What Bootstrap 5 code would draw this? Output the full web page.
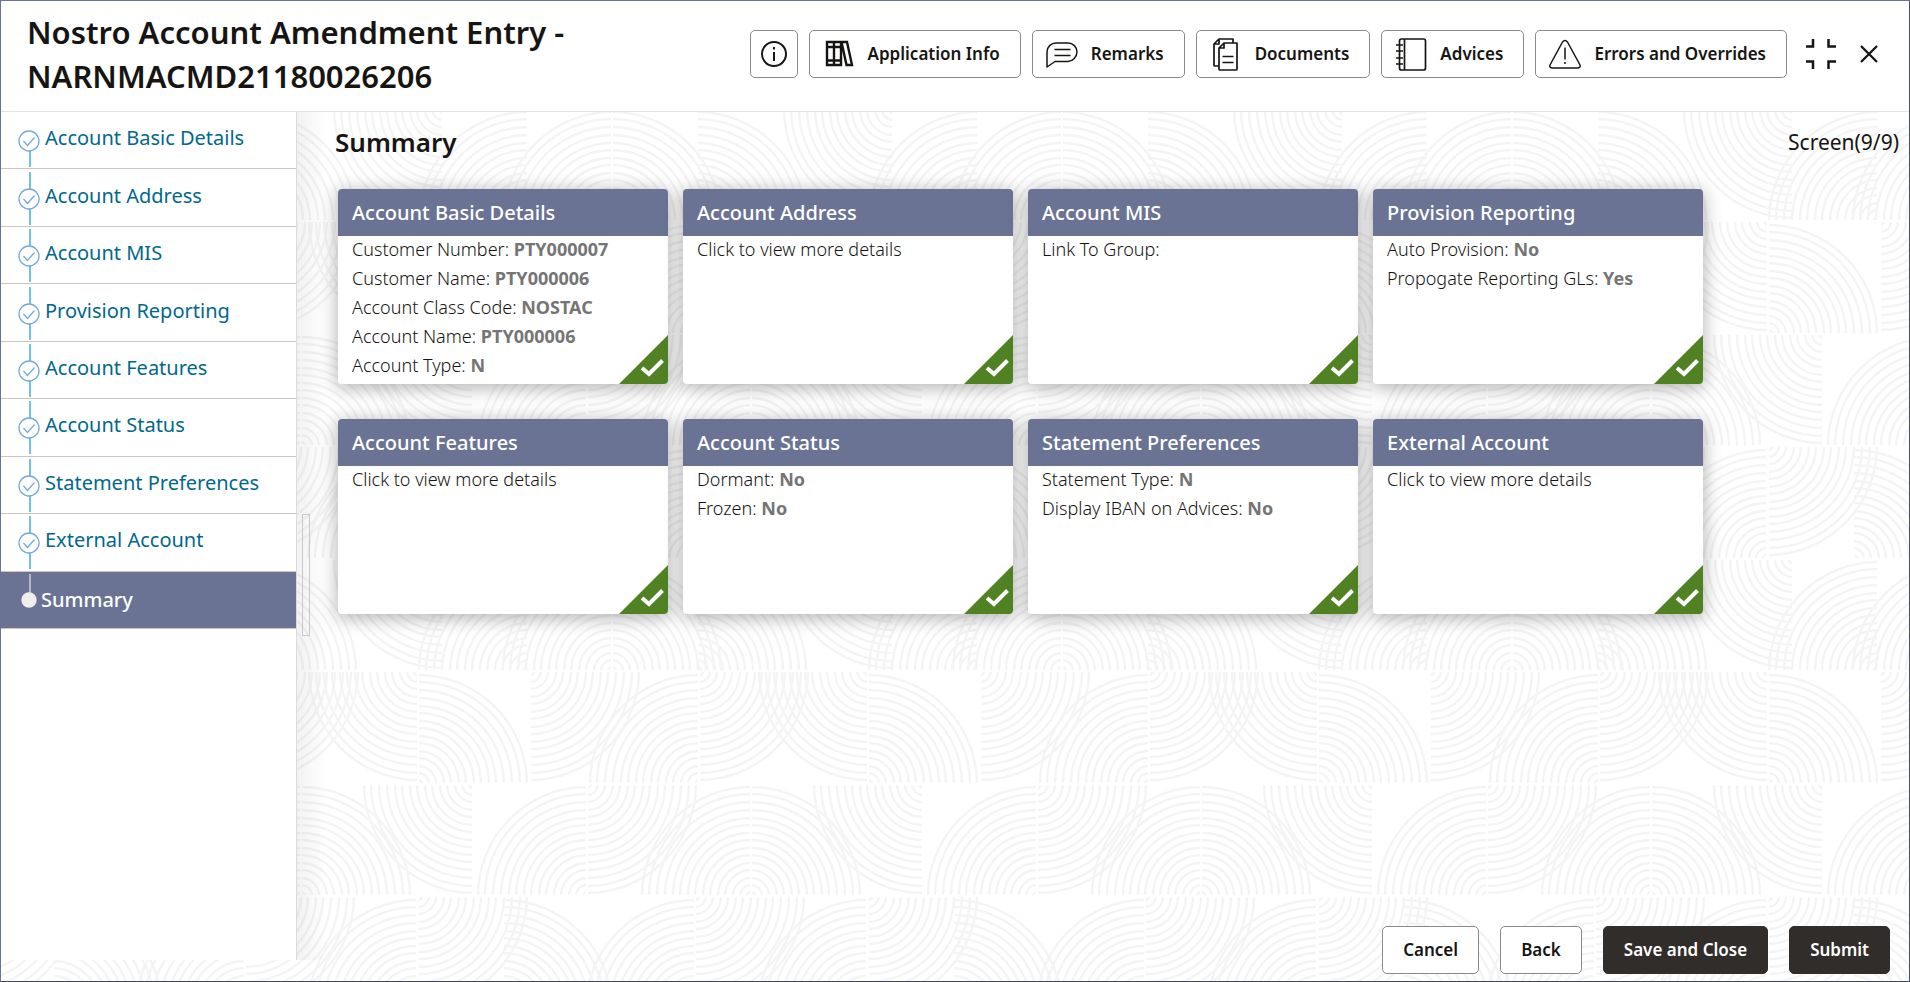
<!DOCTYPE html>
<html lang="en">
<head>
<meta charset="utf-8">
<meta name="viewport" content="width=device-width, initial-scale=1">
<title>Nostro Account Amendment Entry</title>
<link href="https://cdn.jsdelivr.net/npm/bootstrap@5.3.0/dist/css/bootstrap.min.css" rel="stylesheet">
<style>
  :root { --slate: #6b7394; --ink: #161513; --teal: #00688c; --green: #508223; }
  body { font-family: "Noto Sans", "Open Sans", sans-serif; color: var(--ink); font-size: 17px; }
  .frame {
    border: 1px solid var(--slate); border-right-color: #4a5070; border-bottom-color: #3f4565;
    background: #fff url("data:image/svg+xml,%3Csvg xmlns='http://www.w3.org/2000/svg' xmlns:xlink='http://www.w3.org/1999/xlink' width='450' height='450'%3E%3Cdefs%3E%3CclipPath id='c'%3E%3Crect x='1' y='-112' width='112' height='111'/%3E%3C/clipPath%3E%3Cg id='q' clip-path='url(%23c)' fill='none' stroke='%23f4f4f4' stroke-width='2.4'%3E%3Ccircle r='4'/%3E%3Ccircle r='11'/%3E%3Ccircle r='18'/%3E%3Ccircle r='26'/%3E%3Ccircle r='33'/%3E%3Ccircle r='41'/%3E%3Ccircle r='48'/%3E%3Ccircle r='56'/%3E%3Ccircle r='63'/%3E%3Ccircle r='71'/%3E%3Ccircle r='78'/%3E%3Ccircle r='86'/%3E%3Ccircle r='94'/%3E%3Ccircle r='102'/%3E%3Ccircle r='109'/%3E%3C/g%3E%3Cg id='t'%3E%3Cuse xlink:href='%23q' transform='translate(194 112)'/%3E%3Cuse xlink:href='%23q' transform='translate(194 112) scale(-1 1)'/%3E%3Cuse xlink:href='%23q' transform='translate(279 112)'/%3E%3Cuse xlink:href='%23q' transform='translate(475 0) scale(-1 -1)'/%3E%3Cuse xlink:href='%23q' transform='translate(110 112) scale(-1 1)'/%3E%3Cuse xlink:href='%23q' transform='translate(0 225)'/%3E%3Cuse xlink:href='%23q' transform='translate(112 112) scale(1 -1)'/%3E%3Cuse xlink:href='%23q' transform='translate(281 225) scale(-1 1)'/%3E%3Cuse xlink:href='%23q' transform='translate(281 112) scale(1 -1)'/%3E%3Cuse xlink:href='%23q' transform='translate(450 112) scale(-1 -1)'/%3E%3Cuse xlink:href='%23q' transform='translate(505 225) scale(-1 -1)'/%3E%3Cuse xlink:href='%23q' transform='translate(169 337) scale(-1 1)'/%3E%3Cuse xlink:href='%23q' transform='translate(169 225) scale(1 -1)'/%3E%3Cuse xlink:href='%23q' transform='translate(333 337) scale(-1 1)'/%3E%3Cuse xlink:href='%23q' transform='translate(333 337)'/%3E%3Cuse xlink:href='%23q' transform='translate(0 337) scale(1 -1)'/%3E%3Cuse xlink:href='%23q' transform='translate(85 450)'/%3E%3Cuse xlink:href='%23q' transform='translate(277 450) scale(-1 1)'/%3E%3Cuse xlink:href='%23q' transform='translate(277 337) scale(1 -1)'/%3E%3Cuse xlink:href='%23q' transform='translate(449 450) scale(-1 1)'/%3E%3C/g%3E%3C/defs%3E%3Cuse xlink:href='%23t'/%3E%3Cuse xlink:href='%23t' x='-450'/%3E%3C/svg%3E") 417px 108px;
  }
  .topbar { padding: 9px 20px 13px 26px; border-bottom: 1px solid #e4e4e4; background: #fff; }
  .topbar h1 { font-size: 31px; line-height: 44px; font-weight: 600; margin: 0; }
  .tools { gap: 11px; padding-top: 20px; }
  .tool { --bs-btn-border-color: #8b8a88; --bs-btn-color: var(--ink); --bs-btn-bg: #fff; height: 48px; font-size: 17px; font-weight: 600; white-space: nowrap; }
  .btn { --bs-btn-border-radius: 5px; }
  .tool-labelled { gap: 13px; padding: 0 20px 0 13px; }
  .tool-info { width: 48px; padding: 0; }
  .window-tools { height: 48px; gap: 24px; padding: 0 11px 0 8px; }
  .bare { border: 0; background: none; padding: 0; line-height: 0; }
  .sidebar { width: 296px; background: #fff; border-right: 1px solid #d3dde3; margin-bottom: 21px; }
  .steps { display: grid; grid-auto-rows: minmax(0, 1fr); height: 517px; }
  .step { border-bottom: 1px solid #c9c6c2; color: var(--teal); font-size: 20px; text-decoration: none; padding-left: 17px; gap: 5px; }
  .step svg { width: 22px; height: 56px; flex: none; }
  .step span { padding-bottom: 4px; }
  .step.current { background: var(--slate); color: #fff; gap: 1px; }
  .step.current span { padding-bottom: 0; font-weight: 500; }
  .gutter { width: 41px; padding: 402px 0 0 5px; margin-bottom: 21px; background: linear-gradient(90deg, rgba(0,0,0,.05), rgba(0,0,0,0) 30px); }
  .splitter { width: 8px; height: 122px; border: 1px solid #c8c8c8; }
  .content-head { padding: 12px 10px 0 0; height: 77px; margin-left: -3px; }
  .content-head h2 { font-size: 26px; line-height: 36px; font-weight: 600; margin: 0; }
  .screen-no { font-size: 21px; line-height: 36px; }
  .tiles { display: grid; grid-template-columns: repeat(auto-fill, 330px); gap: 35px 15px; }
  .tile { height: 195px; border: 0; border-radius: 4px; overflow: hidden; box-shadow: 0 3px 18px 1px rgba(0,0,0,.3); }
  .tile h3 { background: var(--slate); color: #fff; font-size: 20px; line-height: 47px; font-weight: 500; padding: 0 14px; margin: 0 0 -1px; }
  .tile p { margin: 0; padding: 0 14px; line-height: 29px; font-weight: 300; font-size: 18px; white-space: nowrap; }
  .tile b { color: #757575; font-weight: 700; }
  .tile .done { position: absolute; right: 0; bottom: 0; }
  .actions { gap: 21px; padding: 0 19px 7px 0; }
  .action { height: 48px; padding: 0 20px; font-size: 17px; font-weight: 600; }
  .action-plain { --bs-btn-color: var(--ink); --bs-btn-bg: #fff; --bs-btn-border-color: #8b8a88; }
  .action-solid { --bs-btn-color: #fff; --bs-btn-bg: #312d2a; --bs-btn-border-color: #312d2a; }
</style>
</head>
<body>
<svg width="0" height="0" class="d-none">
  <symbol id="done" viewBox="0 0 49 49"><path d="M49 0V49H0Z" fill="#508223"/><path d="M23 33l7 6L43.500 25.500" fill="none" stroke="#fff" stroke-width="4"/></symbol>
  <symbol id="tick" viewBox="0 0 22 56"><path d="M12 2V19M12 38V55" stroke="#0d9dd0" stroke-width="1.200"/><circle cx="11" cy="29" r="10" fill="#fff" stroke="#74a9e0" stroke-width="1.300"/><path d="M5.500 29l4 4.500 7-8" fill="none" stroke="#74a9e0" stroke-width="1.300"/></symbol>
</svg>
<div class="frame min-vh-100 d-flex flex-column">
  <header class="topbar d-flex">
    <h1 class="flex-grow-1">Nostro Account Amendment Entry - NARNMACMD21180026206</h1>
    <div class="tools d-flex align-items-start flex-shrink-0 ms-3">
      <button type="button" class="btn tool tool-info" aria-label="Information"><svg width="28" height="28" viewBox="0 0 28 28" fill="none" stroke="#161513" stroke-width="2"><circle cx="14" cy="14" r="12"/><path d="M14 12v9M14 7v2.500"/></svg></button>
      <button type="button" class="btn tool tool-labelled d-flex align-items-center">
        <svg width="32" height="32" viewBox="0 0 32 32" fill="none" stroke="#161513" stroke-width="2.400"><path d="M4 4h7v23H4zM11 4h7v23h-7zM4 9h14M4 22.500h14M18.500 4h5.500l5 23h-5.500z"/></svg>Application Info</button>
      <button type="button" class="btn tool tool-labelled d-flex align-items-center">
        <svg width="32" height="32" viewBox="0 0 32 32" fill="none" stroke="#161513" stroke-width="1.500" stroke-linejoin="round"><path d="M1 29V14a9 9 0 0 1 9-9h12a9 9 0 0 1 9 9v0a10 10 0 0 1-9 9.500H9zM8.500 11.500h16M8.500 17.500h16"/></svg>Remarks</button>
      <button type="button" class="btn tool tool-labelled d-flex align-items-center">
        <svg width="32" height="34" viewBox="0 0 32 34" fill="none" stroke="#161513" stroke-width="1.700" stroke-linejoin="round"><path d="M14 6h13v26a1 1 0 0 1-1 1H10a1 1 0 0 1-1-1V11zM14 6v5H9M9 29H5a1 1 0 0 1-1-1V7L9 2h14v4M9 2v5H4M12.500 19.500h11M12.500 25.500h11"/></svg>Documents</button>
      <button type="button" class="btn tool tool-labelled d-flex align-items-center">
        <svg width="32" height="34" viewBox="0 0 32 34" fill="none" stroke="#161513" stroke-width="1.700"><rect x="4.500" y="2" width="26" height="31" rx="2"/><path d="M9.500 2v31M1 8h7M1 14h7M1 21h7M1 27h7"/></svg>Advices</button>
      <button type="button" class="btn tool tool-labelled d-flex align-items-center">
        <svg width="32" height="32" viewBox="0 0 32 32" fill="none" stroke="#161513" stroke-width="1.500" stroke-linejoin="round"><path d="M13.500 4q2.500-3 5 0L31 27q.8 2.500-2 3H3q-2.800-.5-2-3zM16 9.500v12M16 24v2"/></svg>Errors and Overrides</button>
      <div class="window-tools d-flex align-items-center">
        <button type="button" class="bare" aria-label="Collapse"><svg width="30" height="30" viewBox="0 0 30 30" fill="none" stroke="#161513" stroke-width="2.500"><path d="M0 7.500h7V0M22.500 0v7.500H30M0 22.500h7V30M22.500 30v-7.500H30"/></svg></button>
        <button type="button" class="bare" aria-label="Close"><svg width="18" height="18" viewBox="0 0 18 18" stroke="#161513" stroke-width="2.300"><path d="M1 1l16 16M17 1L1 17"/></svg></button>
      </div>
    </div>
  </header>
  <div class="d-flex flex-grow-1">
    <nav class="sidebar flex-shrink-0" aria-label="Steps">
      <div class="steps">
        <a href="#" class="step d-flex align-items-center"><svg viewBox="0 0 22 56"><path d="M12 38V55" stroke="#0d9dd0" stroke-width="1.200"/><circle cx="11" cy="29" r="10" fill="#fff" stroke="#74a9e0" stroke-width="1.300"/><path d="M5.500 29l4 4.500 7-8" fill="none" stroke="#74a9e0" stroke-width="1.300"/></svg><span>Account Basic Details</span></a>
        <a href="#" class="step d-flex align-items-center"><svg><use href="#tick"/></svg><span>Account Address</span></a>
        <a href="#" class="step d-flex align-items-center"><svg><use href="#tick"/></svg><span>Account MIS</span></a>
        <a href="#" class="step d-flex align-items-center"><svg><use href="#tick"/></svg><span>Provision Reporting</span></a>
        <a href="#" class="step d-flex align-items-center"><svg><use href="#tick"/></svg><span>Account Features</span></a>
        <a href="#" class="step d-flex align-items-center"><svg><use href="#tick"/></svg><span>Account Status</span></a>
        <a href="#" class="step d-flex align-items-center"><svg><use href="#tick"/></svg><span>Statement Preferences</span></a>
        <a href="#" class="step d-flex align-items-center"><svg><use href="#tick"/></svg><span>External Account</span></a>
        <a href="#" class="step current d-flex align-items-center" aria-current="step"><svg viewBox="0 0 22 56"><path d="M12 2V24" stroke="#e4e4ea" stroke-width="1.200"/><circle cx="11" cy="28" r="7.700" fill="#efeeec"/></svg><span>Summary</span></a>
      </div>
    </nav>
    <div class="gutter flex-shrink-0"><div class="splitter"></div></div>
    <main class="flex-grow-1 d-flex flex-column">
      <div class="content-head d-flex justify-content-between">
        <h2>Summary</h2>
        <span class="screen-no">Screen(9/9)</span>
      </div>
      <div class="tiles">
        <section class="card tile"><h3>Account Basic Details</h3><p>Customer Number: <b>PTY000007</b></p><p>Customer Name: <b>PTY000006</b></p><p>Account Class Code: <b>NOSTAC</b></p><p>Account Name: <b>PTY000006</b></p><p>Account Type: <b>N</b></p><svg class="done" width="49" height="49"><use href="#done"/></svg></section>
        <section class="card tile"><h3>Account Address</h3><p>Click to view more details</p><svg class="done" width="49" height="49"><use href="#done"/></svg></section>
        <section class="card tile"><h3>Account MIS</h3><p>Link To Group:</p><svg class="done" width="49" height="49"><use href="#done"/></svg></section>
        <section class="card tile"><h3>Provision Reporting</h3><p>Auto Provision: <b>No</b></p><p>Propogate Reporting GLs: <b>Yes</b></p><svg class="done" width="49" height="49"><use href="#done"/></svg></section>
        <section class="card tile"><h3>Account Features</h3><p>Click to view more details</p><svg class="done" width="49" height="49"><use href="#done"/></svg></section>
        <section class="card tile"><h3>Account Status</h3><p>Dormant: <b>No</b></p><p>Frozen: <b>No</b></p><svg class="done" width="49" height="49"><use href="#done"/></svg></section>
        <section class="card tile"><h3>Statement Preferences</h3><p>Statement Type: <b>N</b></p><p>Display IBAN on Advices: <b>No</b></p><svg class="done" width="49" height="49"><use href="#done"/></svg></section>
        <section class="card tile"><h3>External Account</h3><p>Click to view more details</p><svg class="done" width="49" height="49"><use href="#done"/></svg></section>
      </div>
      <div class="actions d-flex justify-content-end mt-auto">
        <button type="button" class="btn action action-plain">Cancel</button>
        <button type="button" class="btn action action-plain">Back</button>
        <button type="button" class="btn action action-solid">Save and Close</button>
        <button type="button" class="btn action action-solid">Submit</button>
      </div>
    </main>
  </div>
</div>
<script src="https://cdn.jsdelivr.net/npm/bootstrap@5.3.0/dist/js/bootstrap.bundle.min.js"></script>
</body>
</html>
